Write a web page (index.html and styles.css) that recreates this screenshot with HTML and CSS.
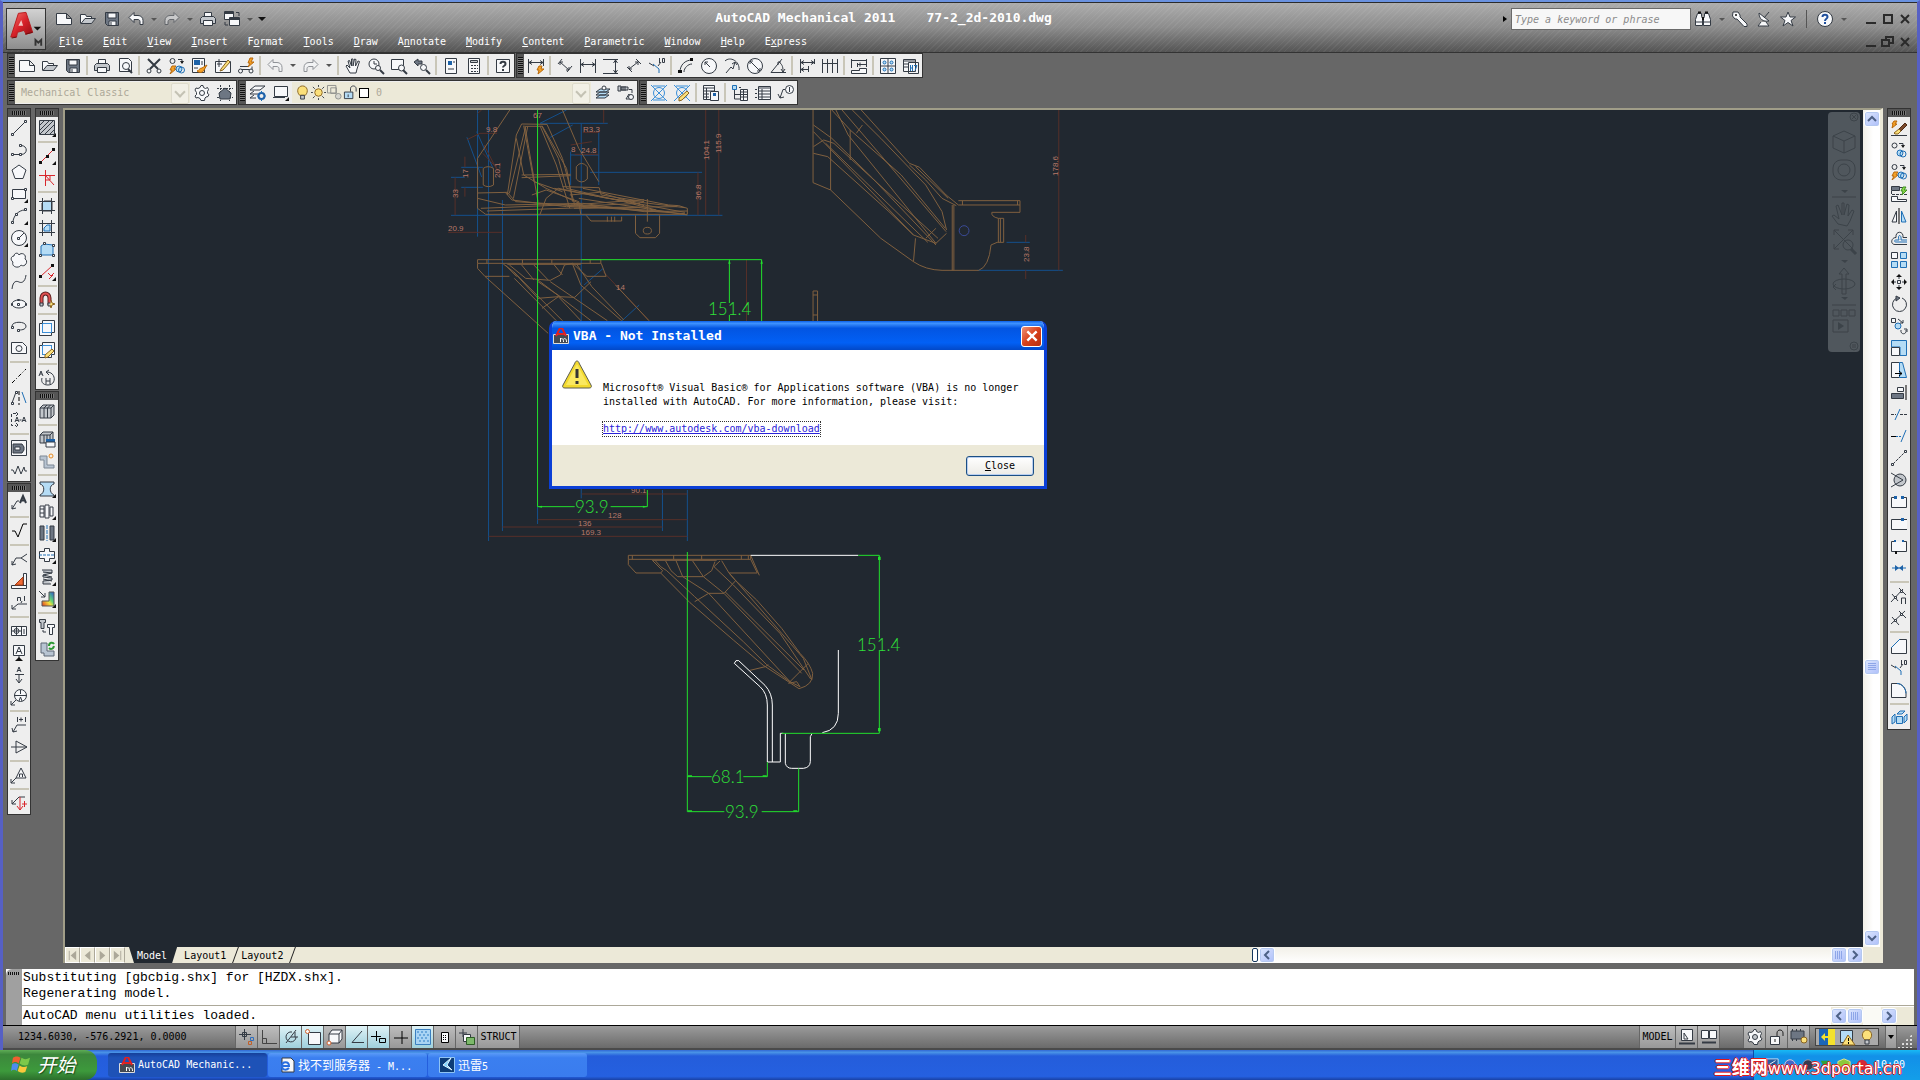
FILE: index.html
```html
<!DOCTYPE html>
<html lang="en">
<head>
<meta charset="utf-8">
<title>AutoCAD Mechanical 2011</title>
<link rel="stylesheet" href="styles.css">
</head>
<body>
<svg class="defs" aria-hidden="true">
  <defs>
    <linearGradient id="redA" x1="0" y1="0" x2="1" y2="1"><stop offset="0" stop-color="#f47a70"/><stop offset=".5" stop-color="#d8222a"/><stop offset="1" stop-color="#8e0d12"/></linearGradient>
    <linearGradient id="rainbow" x1="1" y1="0" x2="0" y2="1"><stop offset="0" stop-color="#2a55d0"/><stop offset=".4" stop-color="#5fd07a"/><stop offset=".6" stop-color="#f2e03c"/><stop offset="1" stop-color="#e0321e"/></linearGradient>
  </defs>
  <symbol id="new" viewBox="0 0 16 16"><path class="w" d="M.5 2.500h10l5 5v6h-15zM10.500 2.500v5h5"/></symbol>
  <symbol id="open" viewBox="0 0 16 16"><path class="w" d="M.5 12.500v-9h5l1 2h5v3"/><path class="g" d="M1 12.500l4-5h10.500l-4 5z"/></symbol>
  <symbol id="save" viewBox="0 0 16 16"><path class="s" d="M1.500 1.500h13v13h-11l-2-2z"/><path class="w" d="M4 2h8v5H4zM5 10h7v4.500H5z"/><path d="M7 11v3"/></symbol>
  <symbol id="undo" viewBox="0 0 16 16"><path class="w" d="M1 6.500l5-5v3h4c3 0 5 2 5 5v4h-3v-3c0-1-1-2-2-2H6v3z"/></symbol>
  <symbol id="redo" viewBox="0 0 16 16"><path class="w" d="M15 6.500l-5-5v3H6c-3 0-5 2-5 5v4h3v-3c0-1 1-2 2-2h4v3z"/></symbol>
  <symbol id="print" viewBox="0 0 16 16"><path class="w" d="M4.500 6V1.500h7V6"/><path class="g" d="M2.500 5.500h11l2 2v5h-15v-5z"/><path class="w" d="M3.500 9.500h9v5h-9z"/></symbol>
  <symbol id="copies" viewBox="0 0 16 16"><circle cx="3.500" cy="3.500" r="2.500"/><path class="k" d="M14 3l-2 3-2-3z"/><path d="M8 1.500h4V4"/><circle class="b lb" cx="9" cy="11" r="3"/><circle class="b" cx="12" cy="12" r="3"/></symbol>
  <symbol id="copyflash" viewBox="0 0 16 16"><circle cx="3.500" cy="3" r="2.500"/><path class="k" d="M15 3l-2 3-2-3z"/><path d="M9 1.500h4V4"/><path class="o" d="M3 8h4L5 11h2l-6 5 2-4H1z"/><circle class="b lb" cx="10" cy="11" r="3"/><circle class="b" cx="12.500" cy="12" r="3"/></symbol>
  <symbol id="acad" viewBox="0 0 16 16"><path fill="#444a52" stroke="#ddd" d="M.5 6.500h15v9H.5z"/><path d="M3 8L7 0h2l4 8M5 6h6" stroke="#e02020" stroke-width="2"/><path d="M7.500 14v-4m0 1c2-1 3 0 3 3m0-3c2-1 3 0 3 3" stroke="#fff"/></symbol>
</svg>

<div class="desktop">
<div class="window">
  <header class="titlebar">
    <button class="appmenu" aria-label="Application menu">
      <svg viewBox="0 0 40 41"><path d="M4 29L12 4l8-1 7 21-7 2-2-4-7 2-1 5z" fill="url(#redA)" stroke="#b81a1c"/><path d="M12 17l3-6 2 6z" fill="#f3c8c4" stroke="none"/><path d="M5 30l5-1M19 26l8-2" stroke="#6d0a0c"/><path class="k" d="M28 18h8l-4 4z"/><path d="M30 38v-6l3 3 3-3v6" stroke="#333" stroke-width="2"/></svg>
    </button>
    <div class="titlerows">
      <div class="row top">
        <div class="quick">
          <button class="q" aria-label="New"><svg><use href="#new"/></svg></button>
          <button class="q" aria-label="Open"><svg><use href="#open"/></svg></button>
          <button class="q" aria-label="Save"><svg><use href="#save"/></svg></button>
          <button class="q" aria-label="Undo"><svg><use href="#undo"/></svg></button>
          <button class="drop" aria-label="Undo list"></button>
          <button class="q dim" aria-label="Redo"><svg><use href="#redo"/></svg></button>
          <button class="drop" aria-label="Redo list"></button>
          <button class="q" aria-label="Plot"><svg><use href="#print"/></svg></button>
          <button class="q" aria-label="Windows"><svg viewBox="0 0 16 16"><path class="w" d="M.5.500h9v8h-9zM5.500 6.500h10v8h-10z"/><path d="M1 2h8M6 8h9" stroke-width="2"/><path d="M12 1.500h3V5M1 11v3h3"/></svg></button>
          <button class="drop" aria-label="Windows list"></button>
          <button class="drop more" aria-label="Customize"></button>
        </div>
        <h1>AutoCAD Mechanical 2011&nbsp;&nbsp;&nbsp; 77-2_2d-2010.dwg</h1>
        <div class="info">
          <button class="tri" aria-label="Collapse search"></button>
          <input type="text" placeholder="Type a keyword or phrase" aria-label="Search">
          <button class="q" aria-label="Find"><svg viewBox="0 0 16 16"><path class="w" d="M2.500 2.500h4v3l1 2v7h-7v-6zM9.500 2.500h4l2 6v6h-7v-7l1-2z"/><path class="k" d="M3 .500h3v2H3zM10 .500h3v2h-3zM7 6h2v3H7z"/><path d="M1 11h6M9 11h6"/></svg></button>
          <button class="drop" aria-label="Find list"></button>
          <button class="q" aria-label="Subscription"><svg viewBox="0 0 16 16"><path class="w" d="M1 1h5l2 3v2l7 7v2.500h-3L5 8H3L.5 5z"/><circle class="k" cx="4" cy="4" r="1"/></svg></button>
          <button class="q" aria-label="Communication"><svg viewBox="0 0 16 16"><path class="w" d="M3 2c0 6 4 9 10 8zM5 11l-3 4h11l-3-4"/><path d="M8 7l5-6"/></svg></button>
          <button class="q" aria-label="Favorites"><svg viewBox="0 0 16 16"><path class="w" d="M8 1l2 5h5.500l-4.500 3.500L13 15l-5-3.500L3 15l2-5.500L.5 6H6z"/></svg></button>
          <i class="bar"></i>
          <button class="q" aria-label="Help"><svg viewBox="0 0 16 16"><circle class="w" cx="8" cy="8" r="7.500"/><path d="M5.500 6c0-3 5-3 5 0 0 2-2.500 1.500-2.500 4M8 11v2" stroke="#1f4f9c" stroke-width="2"/></svg></button>
          <button class="drop" aria-label="Help list"></button>
        </div>
        <div class="controls">
          <button aria-label="Minimize"><svg viewBox="0 0 12 12"><path d="M1 10h10"/></svg></button>
          <button aria-label="Maximize"><svg viewBox="0 0 12 12"><path d="M2 2h8v8H2z"/></svg></button>
          <button aria-label="Close"><svg viewBox="0 0 12 12"><path d="M2 2l8 8M10 2l-8 8"/></svg></button>
        </div>
      </div>
      <div class="row">
        <nav class="menu">
          <a href="#"><u>F</u>ile</a><a href="#"><u>E</u>dit</a><a href="#"><u>V</u>iew</a><a href="#"><u>I</u>nsert</a><a href="#">F<u>o</u>rmat</a><a href="#"><u>T</u>ools</a><a href="#"><u>D</u>raw</a><a href="#">A<u>n</u>notate</a><a href="#"><u>M</u>odify</a><a href="#"><u>C</u>ontent</a><a href="#"><u>P</u>arametric</a><a href="#"><u>W</u>indow</a><a href="#"><u>H</u>elp</a><a href="#">E<u>x</u>press</a>
        </nav>
        <div class="controls">
          <button aria-label="Minimize drawing"><svg viewBox="0 0 12 12"><path d="M1 10h10"/></svg></button>
          <button aria-label="Restore drawing"><svg viewBox="0 0 12 12"><path d="M0 4h7v6H0zM4 4V1h7v6H7"/></svg></button>
          <button aria-label="Close drawing"><svg viewBox="0 0 12 12"><path d="M2 2l8 8M10 2l-8 8"/></svg></button>
        </div>
      </div>
    </div>
  </header>

  <div class="toolbars">
    <div class="barrow">
      <div class="toolbar" role="toolbar" aria-label="Standard">
        <i class="grip"></i>
        <button class="t" aria-label="New"><svg><use href="#new"/></svg></button>
        <button class="t" aria-label="Open"><svg><use href="#open"/></svg></button>
        <button class="t" aria-label="Save"><svg><use href="#save"/></svg></button>
        <i class="sep"></i>
        <button class="t" aria-label="Plot"><svg><use href="#print"/></svg></button>
        <button class="t" aria-label="Preview"><svg viewBox="0 0 16 16"><path class="w" d="M2.500 13.500V.500h9l3 3v10z"/><circle class="w" cx="9" cy="8" r="3.500"/><path d="M11 11l4 4" stroke-width="2"/></svg></button>
        <i class="sep"></i>
        <button class="t" aria-label="Cut"><svg viewBox="0 0 16 16"><path d="M2 1l10 10M14 1L4 11" stroke-width="2"/><circle class="w" cx="3" cy="13" r="2"/><circle class="w" cx="13" cy="13" r="2"/></svg></button>
        <button class="t" aria-label="Power Copy"><svg><use href="#copyflash"/></svg></button>
        <button class="t" aria-label="Match Properties"><svg viewBox="0 0 16 16"><path class="w" d="M.5.500h12v14H.5z"/><path class="bk" d="M2 2h6v5H2z"/><path d="M2 10h4M10 3v4"/><path class="o" d="M5 13c2 0 2-3 5-3l5-3-3 5c-1 3-5 3-7 1z"/></svg></button>
        <button class="t" aria-label="Edit Block"><svg viewBox="0 0 16 16"><path class="w" d="M.5 3.500h15v11H.5z"/><path d="M4 1v8M2 6h5"/><path class="y" d="M6 11l7-9 2 2-7 8-3 1z"/></svg></button>
        <button class="t" aria-label="Power View"><svg viewBox="0 0 16 16"><path class="w" d="M2 8.500h8M2 11.500h12v-3"/><circle class="w" cx="2.500" cy="13" r="2"/><circle class="w" cx="13" cy="13" r="2"/><path class="o" d="M12 0h3l-2 4h3l-6 5 2-4h-2z"/></svg></button>
        <i class="sep"></i>
        <button class="t dim" aria-label="Undo"><svg><use href="#undo"/></svg></button><button class="drop" aria-label="Undo list"></button>
        <button class="t dim" aria-label="Redo"><svg><use href="#redo"/></svg></button><button class="drop" aria-label="Redo list"></button>
        <i class="sep"></i>
        <button class="t" aria-label="Pan"><svg viewBox="0 0 16 16"><path class="w" d="M5 15l-4-7 1-1 3 3-2-7 1.500-.5L6.500 8V1H8v7l1.500-7 1.500.5L10.500 8l2.500-5 1.500.5L12 11l-1 4z"/></svg></button>
        <button class="t" aria-label="Zoom Realtime"><svg viewBox="0 0 16 16"><circle class="w" cx="6" cy="6" r="5"/><path d="M6 3v3h3"/><circle class="w" cx="10" cy="10" r="2.500"/><path d="M12 12l4 4" stroke-width="2"/></svg></button>
        <button class="t" aria-label="Zoom Window"><svg viewBox="0 0 16 16"><path class="w" d="M.5 1.500h12v10H.5z"/><circle class="w" cx="10.500" cy="10" r="3"/><path d="M12 12l4 4" stroke-width="2"/></svg></button>
        <button class="t" aria-label="Zoom Previous"><svg viewBox="0 0 16 16"><path class="s" d="M0 4l4-3v2h4v3H4v2z"/><circle class="w" cx="9.500" cy="9.500" r="3"/><path d="M12 12l4 4" stroke-width="2"/></svg></button>
        <i class="sep"></i>
        <button class="t" aria-label="Properties"><svg viewBox="0 0 16 16"><path class="w" d="M2.500.500h11v15h-11z"/><path class="bk" d="M5 3h4v4H5z"/><path d="M5 11h6M11 3v2"/></svg></button>
        <button class="t" aria-label="Calculator"><svg viewBox="0 0 16 16"><path class="w" d="M2.500.500h11v15h-11z"/><path class="g" d="M4.500 2.500h7v2h-7z"/><path d="M5 7.500h7M5 10.500h7M5 13.500h7" stroke-dasharray="2 1"/></svg></button>
        <i class="sep"></i>
        <button class="t" aria-label="Help"><svg viewBox="0 0 16 16"><path class="w" d="M1.500 1.500h13v13h-13z"/><path d="M5.500 6c0-3 5-3 5 0 0 2-2.500 1.500-2.500 3.500M8 11v2" stroke-width="2"/></svg></button>
      </div>
      <div class="toolbar" role="toolbar" aria-label="Dimension">
        <i class="grip"></i>
        <button class="t" aria-label="Power Dimension"><svg viewBox="0 0 16 16"><path d="M.5 1v14M15.500 1v7M1 4.500h14M4 2.500l-3 2 3 2M12 2.500l3 2-3 2"/><path class="o" d="M11 8h3l-1 3h3l-6 5 1-4H9z"/></svg></button>
        <i class="sep"></i>
        <button class="t" aria-label="Aligned"><svg viewBox="0 0 16 16"><path d="M5 1L1 6M15 8l-5 6M3 4l9 8M3 7V4h3M12 9v3H9"/></svg></button>
        <button class="t" aria-label="Horizontal"><svg viewBox="0 0 16 16"><path d="M.5 1v14M15.500 1v14M1 6.500h14M4 4.500l-3 2 3 2M12 4.500l3 2-3 2"/></svg></button>
        <button class="t" aria-label="Vertical"><svg viewBox="0 0 16 16"><path d="M0 1.500h15M0 15.500h15M12.500 2v13M10.500 5l2-3 2 3M10.500 12l2 3 2-3"/></svg></button>
        <button class="t" aria-label="Rotated"><svg viewBox="0 0 16 16"><path d="M10 1l5 5M1 9l5 5M3 11l9-7M3 8v3h3M9 4h3v3"/></svg></button>
        <button class="t" aria-label="Chamfer"><svg viewBox="0 0 16 16"><path d="M0 5l5 3M9 8l3-4M10.500 0v5M13.500.500h2v4h-2z"/><path class="b" d="M4 6l6 5v4"/></svg></button>
        <i class="sep"></i>
        <button class="t" aria-label="Arc length"><svg viewBox="0 0 16 16"><path d="M2 14C2 7 7 2 14 2M6 14c0-4 4-8 8-8"/><path class="k" d="M0 12h4v3H0zM12 0h3v3h-3z"/></svg></button>
        <button class="t" aria-label="Radius"><svg viewBox="0 0 16 16"><circle class="w" cx="8" cy="8" r="7.500"/><path d="M9 9L4 4M4 7V4h3"/></svg></button>
        <button class="t" aria-label="Jogged"><svg viewBox="0 0 16 16"><path d="M1 3c5-5 15 0 14 9M2 15l5-6 2 2 2-7M8 6l3-2 2 3"/></svg></button>
        <button class="t" aria-label="Diameter"><svg viewBox="0 0 16 16"><circle class="w" cx="8" cy="8" r="7.500"/><path d="M3 3l10 10M3 6V3h3M13 10v3h-3"/></svg></button>
        <button class="t" aria-label="Angular"><svg viewBox="0 0 16 16"><path d="M12 1L1 14.500h15M9 4c4 3 4 6 4 10M8 7V4h3M11 11l2 3 2-3"/></svg></button>
        <i class="sep"></i>
        <button class="t" aria-label="Baseline"><svg viewBox="0 0 16 16"><path d="M1.500 1v14M15.500 1v5M9.500 8v6M2 4.500h13M2 11.500h7M5 2.500l-3 2 3 2M12 2.500l3 2-3 2M5 9.500l-3 2 3 2"/></svg></button>
        <button class="t" aria-label="Chain"><svg viewBox="0 0 16 16"><path d="M.5 1v14M5.500 1v14M10.500 1v14M15.500 1v14M1 5.500h14"/></svg></button>
        <i class="sep"></i>
        <button class="t" aria-label="Automatic dimension"><svg viewBox="0 0 16 16"><path class="w" d="M.5 12.500h8v-2h7v5H.5z"/><path d="M.5 1v9M15.500 1v8M1 2.500h14M6.500 5v4M7 6.500h8M9 4.500v4"/></svg></button>
        <i class="sep"></i>
        <button class="t" aria-label="Hole chart"><svg viewBox="0 0 16 16"><path class="w" d="M.5.500h15v15H.5z"/><path d="M8 1v14M1 8h14"/><circle class="b lb" cx="4.500" cy="4.500" r="1.500"/><circle class="b lb" cx="11.500" cy="4.500" r="1.500"/><circle class="b lb" cx="4.500" cy="11.500" r="1.500"/><circle class="b lb" cx="11.500" cy="11.500" r="1.500"/></svg></button>
        <button class="t" aria-label="Fits list"><svg viewBox="0 0 16 16"><path class="w" d="M.5 1.500h12v12H.5zM5.500 4.500h10v11h-10z"/><path d="M1 3h11M1 6h4M1 9h4"/><path class="b" d="M7.500 7v6M9.500 7v6M8 10h1M11 7.500h3l-2 5"/></svg></button>
      </div>
    </div>
    <div class="barrow">
      <div class="toolbar" role="toolbar" aria-label="Workspaces">
        <i class="grip"></i>
        <div class="combo ws"><select aria-label="Workspace" disabled><option>Mechanical Classic</option></select></div>
        <button class="t" aria-label="Workspace settings"><svg viewBox="0 0 16 16"><path class="w" d="M7 .500h2l.5 2 2 1 2-1 1 2-1 2v2l1.500 1-1 2-2 .5-1 1-.5 2.500H7l-1-2-2-1-2 .5-1-2 1.500-1.500v-2L1 5l1-2 2 .5 2-1z"/><circle cx="8" cy="8" r="2.500"/></svg></button>
        <button class="t" aria-label="My workspace"><svg viewBox="0 0 16 16"><path d="M0 3.500h16M0 12.500h16M3.500 0v16M12.500 0v16" stroke-dasharray="2 1"/><path class="s" d="M2 8l6-5 6 5-1 6H3z"/></svg></button>
      </div>
      <div class="toolbar" role="toolbar" aria-label="Layers">
        <i class="grip"></i>
        <button class="t" aria-label="Layer manager"><svg viewBox="0 0 16 16"><path class="w" d="M0 5l5-4h10l-5 4zM4 6L0 9h8M4 10l-4 3h6"/><circle cx="11.500" cy="11" r="3" stroke="#1d5fa8" stroke-width="2"/><path class="b" d="M11.500 6v2M11.500 14v2M7 11h2M14 11h2"/></svg></button>
        <button class="t" aria-label="Layer"><svg viewBox="0 0 16 16"><path class="w" d="M1.500 1.500h13v10h-13z"/><path d="M0 12.500h12"/><path class="k" d="M16 12v4h-4z"/></svg></button>
        <div class="combo layer">
          <svg viewBox="0 0 16 16"><path class="y" d="M5 11C1 7 3 1 8 1s7 6 3 10z"/><path class="g" d="M6 11h4v4H6z"/></svg>
          <svg viewBox="0 0 16 16"><circle class="y" cx="8" cy="8" r="4"/><path d="M8 0v2M8 14v2M0 8h2M14 8h2M2 2l2 2M12 12l2 2M2 14l2-2M12 4l2-2"/></svg>
          <svg viewBox="0 0 16 16" class="dim"><path d="M.5.500h9v8h-9zM4 3h6v6H4z"/><circle class="g" cx="12" cy="12" r="3"/></svg>
          <svg viewBox="0 0 16 16"><path class="lb" d="M1.500 7.500h9v7h-9z"/><path d="M8 7V4c0-4 6-4 6 0v3M5.500 10v3"/></svg>
          <i class="swatch"></i>
          <select aria-label="Current layer" disabled><option>0</option></select>
        </div>
        <button class="t" aria-label="Make layer current"><svg viewBox="0 0 16 16"><path class="lb" d="M1 13l4-3h9l-4 3zM1 10l4-3h9l-4 3zM1 7l4-3h10l-4 3z"/><circle class="w" cx="9" cy="3" r="2"/></svg></button>
        <button class="t" aria-label="Move to layer"><svg viewBox="0 0 16 16"><path class="g" d="M0 1h3v5H0zM3 2h7v3H3z"/><path d="M5 1v5M7 1v5M11 4.500h3V8"/><path class="w" d="M8 14l3-5 2 5z"/><circle class="w" cx="13" cy="12" r="2.500"/></svg></button>
      </div>
      <div class="toolbar" role="toolbar" aria-label="Part reference">
        <i class="grip"></i>
        <button class="t" aria-label="Centerlines"><svg viewBox="0 0 16 16" class="blue"><circle cx="8" cy="8" r="5.500"/><path d="M0 0l16 16M16 0L0 16M2 1h12M2 15h12"/></svg></button>
        <button class="t" aria-label="Edit centerlines"><svg viewBox="0 0 16 16"><g class="blue"><circle cx="8" cy="8" r="5.500"/><path d="M0 0l16 16M16 0L0 16M2 1h12"/></g><path class="y" d="M5 13l8-7 2 2-7 7-3 1z"/></svg></button>
        <i class="sep"></i>
        <button class="t" aria-label="BOM"><svg viewBox="0 0 16 16"><path class="w" d="M.5.500h11v14H.5z"/><path d="M1 3h10M3.500 3v11M1 6h10M1 9h5M1 12h5"/><path class="w" d="M7.500 6.500h8v9h-8z"/><path class="bk" d="M10 8h3v3h-3z"/></svg></button>
        <i class="sep"></i>
        <button class="t" aria-label="Parts tree"><svg viewBox="0 0 16 16"><path class="b lb" d="M.5.500h4v4h-4z"/><path d="M2.500 5v9H8M3 9.500h5M7 2.500h2"/><path class="w" d="M8.500 4.500h7v11h-7z"/><path d="M9 7h6M9 9.500h6M9 12h6M11.500 5v10"/></svg></button>
        <button class="t" aria-label="Parts list"><svg viewBox="0 0 16 16"><path class="w" d="M3.500 1.500h12v13h-12z"/><path d="M4 3h11M4 6h11M4 9h11M4 12h11M7 4v10M0 4.500h2M0 8.500h2M0 12.500h2"/></svg></button>
        <button class="t" aria-label="Balloon"><svg viewBox="0 0 16 16"><circle class="w" cx="11.500" cy="4.500" r="4"/><path d="M11.500 2v5M7 4.500H5L2 13M0 9l2 4 4-1"/></svg></button>
      </div>
    </div>
  </div>

  <main class="work">
    <div class="dockcol">
      <div class="dock" role="toolbar" aria-label="Draw">
        <i class="grip"></i>
        <button class="t" aria-label="Line"><svg viewBox="0 0 16 16"><path d="M2 14L14 2"/><path class="w" d="M.5 13.500h2v2h-2zM13.500.500h2v2h-2z"/></svg></button>
        <button class="t" aria-label="Polyline"><svg viewBox="0 0 16 16"><path d="M3 12.500h7c7 0 7-9 0-9"/><path class="w" d="M.5 11.500h2v2h-2zM8.500 11.500h2v2h-2zM8.500 2.500h2v2h-2z"/></svg></button>
        <button class="t" aria-label="Polygon"><svg viewBox="0 0 16 16"><path class="w" d="M8 1l7 5-3 8.500H4L1 6z"/></svg></button>
        <button class="t" aria-label="Rectangle"><svg viewBox="0 0 16 16"><path class="w" d="M1.500 3.500h13v9h-13z"/><path class="w" d="M.5 11.500h2v2h-2zM13.500 2.500h2v2h-2z"/><path class="k" d="M17 13v4h-4z"/></svg></button>
        <button class="t" aria-label="Arc"><svg viewBox="0 0 16 16"><path d="M2 14C2 9 7 2 14 2"/><path class="w" d="M.5 13.500h2v2h-2zM4.500 5.500h2v2h-2zM13.500.500h2v2h-2z"/><path class="k" d="M17 13v4h-4z"/></svg></button>
        <button class="t" aria-label="Circle"><svg viewBox="0 0 16 16"><circle class="w" cx="8" cy="8" r="7.500"/><path d="M8 8l5-5"/><path class="w" d="M6.500 7.500h2v2h-2z"/><path class="k" d="M17 13v4h-4z"/></svg></button>
        <button class="t" aria-label="Revision cloud"><svg viewBox="0 0 16 16"><path class="w" d="M8 3c2-3 8-1 6 4 4 2 0 9-4 6-2 4-10 2-8-3C-1 8 0 4 3 4c0-3 4-4 5-1z"/></svg></button>
        <button class="t" aria-label="Spline"><svg viewBox="0 0 16 16"><path d="M1 15c1-9 5-8 7-7s6 1 7-7"/></svg></button>
        <button class="t" aria-label="Ellipse"><svg viewBox="0 0 16 16"><ellipse class="w" cx="8" cy="8" rx="7" ry="4"/><path class="w" d="M6.500 7.500h2v2h-2zM.5 7.500h1v2h-1zM14.500 7.500h1v2h-1zM6.500 3.500h2v1h-2z"/></svg></button>
        <button class="t" aria-label="Ellipse arc"><svg viewBox="0 0 16 16"><path d="M1 8c0-5 14-5 14 0 0 3-3 4-7 4"/><path class="w" d="M.5 8.500h2v2h-2zM6.500 11.500h2v2h-2z"/></svg></button>
        <button class="t" aria-label="Region"><svg viewBox="0 0 16 16"><path class="w" d="M.5 2.500h11l4 4v7H.5z"/><circle class="w" cx="8" cy="8.500" r="3"/></svg></button>
        <i class="sep"></i>
        <button class="t" aria-label="Construction line"><svg viewBox="0 0 16 16"><path d="M1 15L15 1" stroke="#000" stroke-dasharray="4 2 1 2"/></svg></button>
        <button class="t" aria-label="Symmetrical lines"><svg viewBox="0 0 16 16"><path d="M1 13L5 2"/><path d="M8 1v14" stroke="#000" stroke-dasharray="4 2"/><path class="b" d="M11 2l4 11"/><path class="w" d="M.5 12.500h2v2h-2zM4.500 1.500h2v2h-2z"/></svg></button>
        <button class="t" aria-label="Section line"><svg viewBox="0 0 16 16"><path d="M5 1.500H.5v12H5" stroke-dasharray="3 2"/><path d="M5 11l2 2-2 2M5 0l2 2-2 2"/><path d="M4 10l2-5 2 5M5 8.500h2M8.500 8h2M11 10l2-5 2 5M12 8.500h2"/></svg></button>
        <i class="sep"></i>
        <button class="t" aria-label="Hide situation"><svg viewBox="0 0 16 16"><path class="w" d="M.5.500h15v15H.5z"/><path class="s" d="M2 4h9l2 3v3l-2 3H2z"/><path class="w" d="M4 7h5v3H4z"/></svg></button>
        <button class="t" aria-label="Zigzag"><svg viewBox="0 0 16 16"><path d="M0 8h2l2 4 3-8 3 8 3-7 1 4h2"/></svg></button>
      </div>
      <div class="dock" role="toolbar" aria-label="Annotation">
        <i class="grip"></i>
        <button class="t" aria-label="Leader note"><svg viewBox="0 0 16 16"><path d="M1 14l5-8h2M1 10v4l4-1"/><path d="M9 8l3-7 3 7M10 5.500h4" stroke-width="2"/></svg></button>
        <i class="sep"></i>
        <button class="t" aria-label="Surface texture"><svg viewBox="0 0 16 16"><path d="M1 8h3l3 6 5-13h4" stroke="#000"/></svg></button>
        <i class="sep"></i>
        <button class="t" aria-label="Welding"><svg viewBox="0 0 16 16"><path d="M1 14l4-7h5l6-4M10 7l6 4M1 10v4l4-1"/></svg></button>
        <button class="t" aria-label="Weld"><svg viewBox="0 0 16 16"><path class="w" d="M.5 12.500h15v3H.5zM12.500.500h3v12h-3z"/><path d="M12 4v8H4z" fill="#ef6a35" stroke="#a63c14"/></svg></button>
        <button class="t" aria-label="Datum"><svg viewBox="0 0 16 16"><path d="M1 14l6-5h9M1 10v4h4M6.500 6V2.500h3V6M11 6l-1 2M13.500 1v5"/></svg></button>
        <i class="sep"></i>
        <button class="t" aria-label="Feature control"><svg viewBox="0 0 16 16"><path class="w" d="M.5 3.500h15v9H.5z"/><path d="M10.500 4v8M13 6v5M5.500 4v8M1 8h9"/><circle cx="5.500" cy="8" r="2.500"/></svg></button>
        <button class="t" aria-label="Datum identifier"><svg viewBox="0 0 16 16"><path class="w" d="M2.500.500h11v10h-11z"/><path d="M5 9l3-7 3 7M6 6.500h4M8 11v3"/><path class="k" d="M8 12l4 4H4z"/></svg></button>
        <button class="t" aria-label="Edge"><svg viewBox="0 0 16 16"><path d="M6 5l2-5 2 5M7 3.500h2M4 7.500h9M8 8v8M5 12l3 4 3-4"/></svg></button>
        <button class="t" aria-label="Datum target"><svg viewBox="0 0 16 16"><circle class="w" cx="9.500" cy="6.500" r="6"/><path d="M3 6.500h13M9.500 1v4M8 12l1.500-4 1.500 4M5 11l-5 5M0 12v4h4"/></svg></button>
        <i class="sep"></i>
        <button class="t" aria-label="Taper"><svg viewBox="0 0 16 16"><path d="M2 15l4-7h9M1 11l1 4 4-1M6.500 0v5M8 2.500h4M10 .500v4M14.500 0v5"/></svg></button>
        <button class="t" aria-label="Slope"><svg viewBox="0 0 16 16"><path d="M0 8h16M5 2l11 6-11 6z"/></svg></button>
        <i class="sep"></i>
        <button class="t" aria-label="Note symbol"><svg viewBox="0 0 16 16"><path class="w" d="M10 1l5 10H5z"/><path d="M8.500 10V7h3v3M5 11l-5 5M0 12v4h4"/></svg></button>
        <i class="sep"></i>
        <button class="t" aria-label="Insert marker"><svg viewBox="0 0 16 16"><path d="M1 9l7-7h6M1 5v4h4"/><path class="r" d="M9 2v13M6 11l3 4 3-4M11 9h5M13.500 6v6"/></svg></button>
      </div>
    </div>
    <div class="dockcol">
      <div class="dock" role="toolbar" aria-label="Hatch and design">
        <i class="grip"></i>
        <button class="t" aria-label="Hatch"><svg viewBox="0 0 16 16"><path class="g" d="M.5.500h15v14H.5z"/><path d="M1 5l4-4M1 10l9-9M1 14L14 1M6 14l9-9M11 14l4-4"/><path class="k" d="M17 13v4h-4z"/></svg></button>
        <i class="sep"></i>
        <button class="t" aria-label="Centerline"><svg viewBox="0 0 16 16"><path class="r" d="M2 14L14 2"/><path class="k" d="M0 13h3v3H0zM13 0h3v3h-3zM7 7h3v3H7zM17 13v4h-4z"/></svg></button>
        <button class="t" aria-label="Center cross"><svg viewBox="0 0 16 16"><path class="r" d="M0 5.500h16M6.500 0v16M6 5l9 10M6 10h5V5"/></svg></button>
        <i class="sep"></i>
        <button class="t" aria-label="Contour"><svg viewBox="0 0 16 16"><path class="lb" d="M3 5l2-2h8v10H3z"/><path d="M3.500 0v16M12.500 0v16M0 3.500h16M0 12.500h16"/></svg></button>
        <button class="t" aria-label="Contour inside"><svg viewBox="0 0 16 16"><path d="M3.500 0v16M12.500 0v16M0 3.500h16M0 12.500h16"/><path class="b lb" d="M5 11V8l3-3h3v6z"/></svg></button>
        <button class="t" aria-label="Contour edit"><svg viewBox="0 0 16 16"><path class="b lb" d="M2 4l3-2 9 1v10H2z"/><path class="w" d="M.5 12.500h2v2h-2zM13.500 12.500h2v2h-2zM13.500 2.500h2v2h-2zM4.500.500h2v2h-2z"/></svg></button>
        <button class="t" aria-label="Break axis"><svg viewBox="0 0 16 16"><path class="r" d="M2 12L13 2M9 9l3 3 3-3M10 15l4-4"/><path class="k" d="M0 11h3v3H0zM12 0h3v3h-3zM17 13v4h-4z"/></svg></button>
        <i class="sep"></i>
        <button class="t" aria-label="Snap"><svg viewBox="0 0 16 16"><path d="M2.500 13V6c0-6 8-6 8 0v7" stroke="#5a2020" stroke-width="4"/><path d="M2.500 13V6c0-6 8-6 8 0v7" stroke="#e05050" stroke-width="2"/><path class="g" d="M1 11h3v3H1zM9 11h3v3H9z"/><path class="y" d="M12 8l1 3 3 1-3 1-1 3-1-3"/></svg></button>
        <i class="sep"></i>
        <button class="t" aria-label="View"><svg viewBox="0 0 16 16"><path class="w" d="M.5 3.500h12v12H.5zM3.500.500h12v12h-12z"/><path class="blue" d="M3.500 3.500h9v9h-9z"/></svg></button>
        <button class="t" aria-label="Edit view"><svg viewBox="0 0 16 16"><path class="w" d="M.5 3.500h12v12H.5zM3.500.500h12v12h-12z"/><path class="blue" d="M3.500 3.500h9v9h-9z"/><path class="y" d="M6 13l7-6 2 2-6 6-3 1z"/></svg></button>
        <i class="sep"></i>
        <button class="t" aria-label="Recalculate"><svg viewBox="0 0 16 16"><path d="M0 6l2-5 2 5M1 4h2M8 2c9 0 10 13 1 13-6 0-7-4-6-7M10 0L7 2l3 3M7 8v6M11 8v6M7 11h4"/></svg></button>
      </div>
      <div class="dock" role="toolbar" aria-label="Content">
        <i class="grip"></i>
        <button class="t" aria-label="Library"><svg viewBox="0 0 16 16"><path class="g" d="M1 5l3-3h11v10l-3 3H1z"/><path d="M1 5h11v10M12 5l3-3M5 5v10M8.500 5v10M5 5l3-3M8.500 5l3-3"/></svg></button>
        <i class="sep"></i>
        <button class="t" aria-label="Library manager"><svg viewBox="0 0 16 16"><path class="g" d="M1 4l3-3h10v8l-3 3H1z"/><path d="M1 4h10v8M5 4v8M8 4v8M11 4l3-3"/><path class="bk" d="M7 8h9v3H7z"/><path class="w" d="M7 11h9v5H7z"/></svg></button>
        <button class="t" aria-label="Power parts"><svg viewBox="0 0 16 16"><path d="M1 3h7v9h7v3H5V7H1z" fill="#b8c4d2" stroke="#7d8794"/><circle cx="12" cy="3" r="2" stroke="#e88a20"/></svg></button>
        <i class="sep"></i>
        <button class="t" aria-label="Steel shapes"><svg viewBox="0 0 16 16"><path class="lb" d="M1 1h14v2c-5 1-5 9 0 11v1H1v-1c5-2 5-10 0-11z"/><path class="k" d="M17 13v4h-4z"/></svg></button>
        <button class="t" aria-label="Screws"><svg viewBox="0 0 16 16"><path class="w" d="M1 3h4v11H1zM6 2h4v13H6zM11 4h3v9h-3z"/><path d="M1 6h4M1 10h4"/><path class="k" d="M17 13v4h-4z"/></svg></button>
        <button class="t" aria-label="Holes"><svg viewBox="0 0 16 16"><path class="s" d="M1 1h4v14H1zM11 1h4v14h-4z"/><path class="b" d="M8 0v16" stroke-dasharray="4 1"/><path class="k" d="M17 13v4h-4z"/></svg></button>
        <button class="t" aria-label="Shaft"><svg viewBox="0 0 16 16"><path class="w" d="M.5 4.500h5v-3h5v3h5v7h-5v3h-5v-3h-5z"/><path class="b" d="M0 8h16" stroke-dasharray="3 1"/><path class="k" d="M17 13v4h-4z"/></svg></button>
        <button class="t" aria-label="Springs"><svg viewBox="0 0 16 16"><path class="g" d="M3 1h10v3l-9 2v2l9 1v2l-9 1v3h8"/><path d="M13 4L4 3M13 8L4 6M13 12l-9-2"/><path class="k" d="M17 13v4h-4z"/></svg></button>
        <button class="t" aria-label="Stress analysis"><svg viewBox="0 0 16 16"><path d="M10 1h5v14H3v-5h7z" fill="url(#rainbow)" stroke="#555"/><path d="M0 0l6 6M6 2v4H2"/><path class="k" d="M17 13v4h-4z"/></svg></button>
        <i class="sep"></i>
        <button class="t" aria-label="Change representation"><svg viewBox="0 0 16 16"><path class="g" d="M.5.500h6v3H5v6H2v-6H.5z"/><path class="w" d="M8.500 5.500h7v3h-2v7h-3v-7h-2z"/><path d="M4 11v2h3"/></svg></button>
        <button class="t" aria-label="Refresh parts"><svg viewBox="0 0 16 16"><path d="M2 2h6v8h7v5H5v-3H2z" fill="#b8c4d2" stroke="#5d6774"/><path d="M10 5c0-4 4-4 5-2M15 5c-1 4-4 3-5 2" stroke="#2e9a35" stroke-width="2"/></svg></button>
      </div>
    </div>

    <section class="mdi" aria-label="Drawing window">
      <div class="view">
        <div class="canvas">
          <svg class="drawing" role="img" aria-label="Bracket drawing">
            <g transform="matrix(.40816 0 0 .33333 375 -5)">
              <path class="dblue" d="M92 15V395M119 15V1308M153 285V1278M346 55V1180M239 1205V1257M545 1155V1278M606 1155V1308M27 331H692M368 202H642M245 55H411M389 80V240M320 140V240M320 150H389M52 187H105M52 247H105M27 217H60M66 97L102 216M90 80L130 190M245 55L310 15M270 97L325 60M353 540L400 490M446 647L488 600M1388 412H1445M1317 496H1526"/>
              <path class="dred" d="M651 15V331M683 15V331M632 202V331M401 15V55M37 217V331M61 155V187M61 247V275M20 382H153M66 104L98 85H140M102 15L92 25M350 82H390M330 148H388M320 120L372 110M751 464V648M1516 15V496M1435 390V412M1435 496V522M400 500L512 647M347 1167H606M239 1244H606M153 1266H545M119 1294H606M108 120L146 210M105 145L140 190"/>
              <path class="dbrown" d="M171 15L92 160V310L112 328H606V310L585 302 560 300 350 250M165 270L187 90 200 57 262 58 300 160 330 300M170 265L210 64H250L290 160 310 250M180 280L215 64M208 62L240 290M205 62L230 230 300 260M187 100L205 210 260 250 350 300M245 62L285 180 318 310M250 62L310 190 325 290M92 264L165 262 185 290 350 302 560 320M92 280L160 300 350 295 500 320 606 318M100 310L300 300 600 326M115 318L350 308 580 305M160 262L176 285 310 305 490 295M300 245L390 248 395 270 500 290M310 250L450 290 530 315M280 250L600 322M200 210L320 208M200 218L320 212M245 328L260 280 290 250 410 280 600 308M225 270L260 255 340 290 345 328M300 15L340 130 389 230M318 270L390 262 500 302M320 300L500 284M328 310L490 308M340 280L606 330M106 190V240Q118 250 131 240V190Q118 180 106 190ZM334 185V222Q346 240 361 222V185Q346 165 334 185ZM358 331L370 348H445V335M410 335V350M420 335V350M428 335V350M479 331V385L490 398H528L538 385V331M508 282V350M92 464H394V475H92ZM115 464V475M202 464V475M274 464V475M368 464V475M92 475V490L110 514H170M110 514L265 685M155 477L180 500L300 647M160 480L188 515M165 478H345M170 480L210 520 270 526 295 510 305 480M200 480L230 525M240 530L295 575M230 480L265 525M280 480L300 510M305 480L325 475 345 498 360 514H407M395 475L407 514M325 478L345 540 445 647M335 478L372 545 450 645M180 500L240 580 290 575M240 525L370 647M290 575L345 647M250 610L290 575 330 577 370 530M270 530L410 647M182 520L285 647"/>
              <circle class="dbrown" cx="508" cy="377" r="10"/>
              <path class="dbrown" d="M914 15V233L957 255 1080 400 1160 470Q1190 495 1230 496H1320Q1345 485 1350 420L1365 412H1381V340H1368V412M957 15V255M1373 340V412M1032 15L1150 175 1175 187 1240 270 1270 300H1421V287H1270M1280 287V300M1415 287V300M1421 300V322H1352Q1350 335 1368 340M1150 180L1190 225 1230 280 1265 302M1165 185L1245 280M1259 300V496M1255 300V496M960 15L1005 75 1130 210 1238 370M985 15L1240 380M1010 15L1080 100 1190 240 1230 320 1241 375M970 15L1000 90 1215 415M915 60L960 100 1060 220 1215 420M915 80L1160 390 1215 415 1241 385M915 145L950 155 1100 320 1160 390M915 125L940 105 965 115 1220 400M945 115L1195 412M1005 75V165M1020 85L1035 60M1160 470L1165 400M1190 400L1215 370M914 648V558H925V648M914 570H925M914 630H925M430 540L512 647"/>
              <ellipse cx="1284" cy="377" rx="12" ry="15" stroke="#3a4a96"/>
              <path class="dgreen" d="M239 15V1205M346 464H788V650M709 464V594M709 630V650M508 1155V1205M239 1205H330M418 1205H508"/>
              <path class="darrow" d="M706 476l3-12 3 12zM785 476l3-12 3 12zM250 1202l-11 3 11 3zM497 1202l11 3-11 3z"/>
            </g>
            <g transform="matrix(.33333 0 0 .33333 535 420)">
              <path class="dbrown" d="M85 76H452V88H85ZM97 76V88M221 76V88M305 76V88M424 76V88M445 76V88M85 88V104L108 129H182M452 76L478 136M452 88L472 129H387M157 91H350M157 91L188 122 182 129 270 218 400 330 490 406 597 476Q640 465 638 430Q630 400 600 370L545 295 470 210 407 152 387 129 365 92M165 91L182 110 200 122 284 200 430 335 500 404 570 455 600 470M197 93L213 122 233 140 310 140 335 122 345 95M228 92L248 140 326 190 372 190 407 152M278 93L310 140 372 190 605 430M360 93L342 110 400 165 540 310 632 447M326 190L570 455M284 215L326 190M375 185L612 420M388 130L545 310 610 385 636 450M450 421L496 410 505 404M570 455L625 400M565 460L590 455 600 470"/>
              <path class="dwhite" d="M452 76H775M415 391L495 466Q517 490 517 525V696M403 400L480 470Q502 490 502 525V696H541V610H550M403 400L408 392H415M556 610V700Q560 715 575 715H610Q630 713 631 695V620L636 611M715 360V550Q715 600 667 608"/>
              <path class="dgreen" d="M262 66V845M775 76H838V325M838 362V610H545M502 697V740M262 740H335M430 740H502M596 715V845M262 845H373M485 845H596"/>
              <path class="darrow" d="M834 80h8v10h-8zM834 594h8v10h-8zM264 736h12v4h-12zM488 736h12v4h-12zM264 841h12v4h-12zM580 841h12v4h-12z"/>
            </g>
            <g class="big"><text x="643" y="205">151.4</text><text x="510" y="403">93.9</text><text x="792" y="541">151.4</text><text x="646" y="673">68.1</text><text x="660" y="708">93.9</text></g>
            <g class="small"><text x="383" y="121">20.9</text><text x="513" y="416">136</text><text x="543" y="408">128</text><text x="516" y="425">169.3</text><text x="566" y="383">90.1</text><text x="421" y="22">9.8</text><text x="516" y="43">24.8</text><text x="518" y="22">R3.3</text><text x="506" y="42">8</text><text x="468" y="8">67</text><text x="551" y="180">14</text>
              <text transform="translate(644 50) rotate(-90)">104.1</text><text transform="translate(656 43) rotate(-90)">115.9</text><text transform="translate(636 90) rotate(-90)">36.8</text><text transform="translate(993 66) rotate(-90)">178.6</text><text transform="translate(964 152) rotate(-90)">23.8</text><text transform="translate(393 88) rotate(-90)">33</text><text transform="translate(403 68) rotate(-90)">17</text><text transform="translate(435 68) rotate(-90)">20.1</text></g>
          </svg>
          <div class="navbar">
            <svg viewBox="0 0 32 240"><circle cx="26" cy="5" r="4"/><path d="M24 3l4 4M28 3l-4 4"/><path d="M16 19l11 5v12l-11 5-11-5V24zM5 24l11 5 11-5M16 29v12"/><rect x="5" y="48" width="22" height="20" rx="8"/><circle cx="16" cy="58" r="6"/><path class="nf" d="M13 78h7l-3 3z"/><path d="M4 85h24M10 112L4 104l2-1 5 4-3-13 2-1 4 10V91h2v12l3-11 2 1-1 11 4-6 2 1-4 10-3 5zM6 118l19 19M25 118L6 137M6 123v-5h5M20 118h5v5M6 132v5h5"/><circle cx="20" cy="133" r="5"/><path d="M23 137l5 5" stroke-width="3"/><path class="nf" d="M13 148h7l-3 3z"/><ellipse cx="16" cy="172" rx="11" ry="5"/><path d="M14 182v-20h-3l5-6 5 6h-3v20zM8 172l-3 3 3 3"/><path class="nf" d="M13 185h7l-3 3z"/><path d="M4 193h24M5 198h6v6H5zM13 198h6v6h-6zM21 198h6v6h-6zM5 208h15v12H5z"/><path class="nf" d="M10 210l6 4-6 4z"/><circle cx="26" cy="234" r="4"/><path d="M24 233h4M24 235h4"/></svg>
          </div>

          <section class="dialog" role="dialog" aria-labelledby="dlgtitle">
            <header><svg><use href="#acad"/></svg><h2 id="dlgtitle">VBA - Not Installed</h2>
              <button class="x" aria-label="Close dialog"><svg viewBox="0 0 12 12"><path d="M2 2l8 8M10 2l-8 8" stroke="#fff" stroke-width="2"/></svg></button></header>
            <div class="message">
              <svg class="warn" viewBox="0 0 30 30"><path d="M15 1c1 0 2 1 2 2l12 22c1 2 0 3-2 3H3c-2 0-3-1-2-3L13 3c0-1 1-2 2-2z" fill="#f2d92e" stroke="#5c5c50"/><path d="M4 25L15 4l11 21z" fill="#fae860" stroke="none"/><path d="M15 9v9M15 21v3" stroke="#333" stroke-width="3"/></svg>
              <div><p>Microsoft® Visual Basic® for Applications software (VBA) is no longer<br>installed with AutoCAD. For more information, please visit:</p>
              <a href="#">http://www.autodesk.com/vba-download</a></div>
            </div>
            <footer><button class="ok"><span><u>C</u>lose</span></button></footer>
          </section>
        </div>
        <div class="vscroll"><button class="sb" aria-label="Scroll up"><svg viewBox="0 0 10 10"><path d="M1 7l4-4 4 4"/></svg></button><i class="above"></i><button class="sb" aria-label="Vertical position"><svg viewBox="0 0 10 10"><path class="ln" d="M1 1.500h8M1 3.500h8M1 5.500h8M1 7.500h8"/></svg></button><i class="below"></i><button class="sb" aria-label="Scroll down"><svg viewBox="0 0 10 10"><path d="M1 3l4 4 4-4"/></svg></button></div>
      </div>
      <div class="tabrow">
        <div class="tabnav">
          <button aria-label="First tab"><svg viewBox="0 0 14 14"><path class="nf" d="M11 2v10L5 7z"/><path d="M3.500 2v10"/></svg></button>
          <button aria-label="Previous tab"><svg viewBox="0 0 14 14"><path class="nf" d="M10 2v10L4 7z"/></svg></button>
          <button aria-label="Next tab"><svg viewBox="0 0 14 14"><path class="nf" d="M4 2v10l6-5z"/></svg></button>
          <button aria-label="Last tab"><svg viewBox="0 0 14 14"><path class="nf" d="M3 2v10l6-5z"/><path d="M10.500 2v10"/></svg></button>
        </div>
        <button class="tab on">Model</button><button class="tab">Layout1</button><button class="tab">Layout2</button>
        <div class="hscroll"><i class="split"></i><button class="sb" aria-label="Scroll left"><svg viewBox="0 0 10 10"><path d="M7 1L3 5l4 4"/></svg></button><i class="space"></i><button class="sb" aria-label="Horizontal position"><svg viewBox="0 0 10 10"><path class="ln" d="M1.500 1v8M3.500 1v8M5.500 1v8M7.500 1v8"/></svg></button><button class="sb" aria-label="Scroll right"><svg viewBox="0 0 10 10"><path d="M3 1l4 4-4 4"/></svg></button></div>
      </div>
    </section>

    <div class="dockcol">
      <div class="dock" role="toolbar" aria-label="Modify">
        <i class="grip"></i>
        <button class="t" aria-label="Power Erase"><svg viewBox="0 0 16 16"><path class="o" d="M3 1h3L4 4h2L1 8l1-4H1z"/><path d="M0 15.500h16"/><path d="M8 9l6-6 2 2-6 6z" fill="#7c4a2c" stroke="#4d2b16"/><path class="y" d="M3 13l5-4 2 2-3 3H4z"/></svg></button>
        <button class="t" aria-label="Copy"><svg><use href="#copies"/></svg></button>
        <button class="t" aria-label="Power Copy"><svg><use href="#copyflash"/></svg></button>
        <button class="t" aria-label="Power Recall"><svg viewBox="0 0 16 16"><path class="s" d="M.5.500h8v4h-8z"/><path d="M.5 5v3.500H16M9 1.500h6" stroke-dasharray="3 1"/><path class="w" d="M.5 10.500h6v3h9v2H.5z"/><path d="M12 1h3l-2 3h3l-5 5 1-4h-2z" fill="#8fe04c" stroke="#3f8f20"/></svg></button>
        <button class="t" aria-label="Mirror"><svg viewBox="0 0 16 16"><path class="w" d="M5.500 3v11H1z"/><path class="b lb" d="M10.500 3v11H15z"/><path d="M8 0v16" stroke="#000"/></svg></button>
        <button class="t" aria-label="Offset"><svg viewBox="0 0 16 16"><path d="M16 14.500H4c-5 0-4-7 1-7-1-7 8-7 7 0h4"/><path class="b" d="M16 12H5c-2 0-2-2 0-2h3c-2-6 3-6 2 0h6"/></svg></button>
        <button class="t" aria-label="Array"><svg viewBox="0 0 16 16"><path class="w" d="M.5.500h6v6h-6z"/><path class="b lb" d="M9.500.500h6v6h-6zM.5 9.500h6v6h-6zM9.500 9.500h6v6h-6z"/></svg></button>
        <button class="t" aria-label="Move"><svg viewBox="0 0 16 16"><path class="k" d="M8 0l3 3H5zM8 16l3-3H5zM0 8l3-3v6zM16 8l-3-3v6z"/><path d="M8 3v2M8 11v2M3 8h2M11 8h2M6.500 6.500h3v3h-3z"/></svg></button>
        <button class="t" aria-label="Rotate"><svg viewBox="0 0 16 16"><path d="M6 2a7 7 0 1 0 5 0"/><path class="s" d="M5 0l4 2-4 3z"/></svg></button>
        <button class="t" aria-label="Align"><svg viewBox="0 0 16 16"><path class="w" d="M.5.500h4v4h-4z"/><circle class="b lb" cx="7" cy="8" r="3"/><path d="M7 1l5 4M12 2v3H9M10 12c-1 5 6 5 5 0M13 11h3v3"/></svg></button>
        <button class="t" aria-label="Scale"><svg viewBox="0 0 16 16"><path class="b lb" d="M.5.500h15v15H9V7H.5z"/><path class="w" d="M.5 7.500h8v8h-8z"/></svg></button>
        <button class="t" aria-label="Stretch"><svg viewBox="0 0 16 16"><path class="w" d="M.5.500h8v15h-8z"/><path class="b lb" d="M8.500.500h3l4 15h-7z"/><path d="M4 11.500h7M8 9l3 2.500L8 14" stroke="#000"/></svg></button>
        <button class="t" aria-label="Align edge"><svg viewBox="0 0 16 16"><path class="s" d="M.5 9.500h12v5H.5z"/><path class="w" d="M6.500 3.500h6v4h-6z"/><path d="M15 1v15" stroke="#000"/></svg></button>
        <button class="t" aria-label="Trim"><svg viewBox="0 0 16 16"><path d="M0 8.500h5M9 8.500h7" stroke-dasharray="3 1"/><path class="b" d="M4 14L9 3"/></svg></button>
        <button class="t" aria-label="Extend"><svg viewBox="0 0 16 16"><path d="M0 8.500h5" stroke="#000"/><path class="b" d="M5 8.500h5" stroke-dasharray="2 1"/><path class="b" d="M10 14l5-12"/></svg></button>
        <button class="t" aria-label="Lengthen"><svg viewBox="0 0 16 16"><path d="M2 14L14 2" stroke-dasharray="3 1"/><path class="w" d="M.5 13.500h2v2h-2zM13.500.500h2v2h-2z"/></svg></button>
        <button class="t" aria-label="Detail"><svg viewBox="0 0 16 16"><circle class="g" cx="9" cy="8" r="6"/><path d="M0 1l12 7-12 7"/></svg></button>
        <button class="t" aria-label="Break"><svg viewBox="0 0 16 16"><path class="w" d="M3 3.500H.5v10h15v-10H13"/><path class="bk" d="M3 2h3v3H3zM10 2h3v3h-3z"/></svg></button>
        <button class="t" aria-label="Break at point"><svg viewBox="0 0 16 16"><path class="w" d="M16 3.500H.5v10H16"/><path class="bk" d="M10 2h3v3h-3z"/></svg></button>
        <button class="t" aria-label="Join"><svg viewBox="0 0 16 16"><path class="w" d="M3 3.500H.5v10h15v-10H13"/><path class="bk" d="M3 2h2v2H3zM11 2h2v2h-2z"/><path class="k" d="M4 13h2v3H4z"/></svg></button>
        <button class="t" aria-label="Close gap"><svg viewBox="0 0 16 16"><path class="b" d="M1 8h14"/><path class="bk" d="M4 5l4 3-4 3zM12 5L8 8l4 3z"/></svg></button>
        <i class="sep"></i>
        <button class="t" aria-label="Multiple nodes"><svg viewBox="0 0 16 16"><path d="M0 14l12-13M8 0l7 7M1 6l6 7M10.500 16v-6h4v6"/><path class="w" d="M9.500 2.500h2v2h-2zM3.500 8.500h2v2h-2z"/></svg></button>
        <button class="t" aria-label="Nodes"><svg viewBox="0 0 16 16"><path d="M0 14L14 1M8 1l7 7M1 7l7 8"/><path class="w" d="M9.500 3.500h2v2h-2zM3.500 9.500h2v2h-2z"/></svg></button>
        <i class="sep"></i>
        <button class="t" aria-label="Chamfer"><svg viewBox="0 0 16 16"><path class="w" d="M.5 9.500l8-8h7v14H.5z"/><path class="b" d="M0 10l9-9"/></svg></button>
        <button class="t" aria-label="Chamfer dimension"><svg viewBox="0 0 16 16"><path d="M0 5l5 3M9 8l3-4M10.500 0v5M13.500.500h2v4h-2z"/><path class="b" d="M4 6l6 5v4"/></svg></button>
        <button class="t" aria-label="Fillet"><svg viewBox="0 0 16 16"><path class="w" d="M.5 15.500v-14H6c5 0 9 5 9 10v4z"/><path class="b" d="M6 1.500c5 0 9 5 9 10"/></svg></button>
        <i class="sep"></i>
        <button class="t" aria-label="Explode"><svg viewBox="0 0 16 16"><path class="b lb" d="M5.500 6.500h6v7h-6zM1 7l3-3v8l-3 2zM6 4l3-3h5l-3 3zM13 7l3-3v6l-3 3z"/></svg></button>
      </div>
    </div>
  </main>

  <section class="command" aria-label="Command window">
    <i class="cgrip"></i>
    <div class="lines">
      <p>Substituting [gbcbig.shx] for [HZDX.shx].</p>
      <p>Regenerating model.</p>
      <div class="prompt"><p>AutoCAD menu utilities loaded.</p>
        <div class="cscroll"><button class="sb" aria-label="Scroll left"><svg viewBox="0 0 10 10"><path d="M7 1L3 5l4 4"/></svg></button><button class="sb" aria-label="Position"><svg viewBox="0 0 10 10"><path class="ln" d="M1.500 1v8M3.500 1v8M5.500 1v8M7.500 1v8"/></svg></button><i class="space"></i><button class="sb" aria-label="Scroll right"><svg viewBox="0 0 10 10"><path d="M3 1l4 4-4 4"/></svg></button></div></div>
    </div>
  </section>

  <footer class="status">
    <output>1234.6030, -576.2921, 0.0000</output>
    <div class="modes">
      <button aria-label="Infer"><svg viewBox="0 0 16 16"><path d="M5.500 0v11M0 5.500h12M3.500 3.500h4v4h-4z"/><path d="M11.500 8.500h3v3h-3z" stroke="#2f6fc0"/><path d="M9.500 12.500h3v3h-3z" stroke="#c0602a"/></svg></button>
      <button aria-label="Ortho"><svg viewBox="0 0 16 16"><path d="M1.500 1v13.500H16M1.500 9.500h4v5" stroke="#444"/></svg></button>
      <button class="on" aria-label="Polar"><svg viewBox="0 0 16 16"><path d="M13 8a5 5 0 1 1-4-5M3 14L13 1M8 8h7M12 3v5"/></svg></button>
      <button class="on" aria-label="Object snap"><svg viewBox="0 0 16 16"><path class="w" d="M3.500 3.500h12v12h-12z"/><circle class="w" cx="2.500" cy="2.500" r="2" stroke="#d0602a"/></svg></button>
      <button aria-label="3D snap"><svg viewBox="0 0 16 16"><path class="w" d="M2 5l3-4h10v9l-3 4H2zM2 5h10v9M12 5l3-4"/><circle class="w" cx="2" cy="14" r="2" stroke="#d0602a"/></svg></button>
      <button class="on" aria-label="Tracking"><svg viewBox="0 0 16 16"><path d="M13 2L3 13.500h12"/></svg></button>
      <button class="on" aria-label="Dynamic UCS"><svg viewBox="0 0 16 16"><path d="M0 7.500h10M5.500 2v10M8.500 9.500h6v4h-6z" stroke="#000"/></svg></button>
      <button aria-label="Dynamic input"><svg viewBox="0 0 16 16"><path d="M1 9h14M9 2v13" stroke="#000"/></svg></button>
      <button class="on" aria-label="Transparency"><svg viewBox="0 0 16 16"><path fill="#a9d4f4" stroke="#3a7fc0" d="M.5.500h15v15H.5z"/><path d="M2 3h12M4 6h12M2 9h12M4 12h10" stroke="#6aa8dc" stroke-width="2" stroke-dasharray="2 2"/></svg></button>
      <button aria-label="Quick properties"><svg viewBox="0 0 16 16"><path class="w" d="M4.500 3.500h7v10h-7z" stroke="#000"/><path d="M6 6.500h4M6 8.500h4M6 10.500h4" stroke="#000" stroke-dasharray="1 1"/></svg></button>
      <button aria-label="Selection cycling"><svg viewBox="0 0 16 16"><path d="M4 0v8M0 4h8"/><path class="w" d="M4.500 5.500h7v7h-7z"/><path d="M7.500 8.500h8v7h-8z" fill="#7cb86a" stroke="#2c5c25"/></svg></button>
      <button class="wide">STRUCT</button>
    </div>
    <div class="modes right">
      <button class="mod">MODEL</button>
      <button aria-label="Layout"><svg viewBox="0 0 16 16"><path class="w" d="M2.500.500h11v11h-11zM5 4l4 6H5z"/><path d="M0 14.500h16" stroke-width="2"/></svg></button>
      <button aria-label="Quick view"><svg viewBox="0 0 16 16"><path class="w" d="M.5 1.500h7v8h-7zM8.500 1.500h7v8h-7z"/><path d="M1 13.500h14" stroke-width="2"/></svg></button>
    </div>
    <div class="modes end">
      <button aria-label="Workspace switching"><svg viewBox="0 0 16 16"><path class="w" d="M7 .500h2l.5 2 2 1 2-1 1 2-1 2v2l1.500 1-1 2-2 .5-1 1-.5 2.500H7l-1-2-2-1-2 .5-1-2 1.500-1.500v-2L1 5l1-2 2 .5 2-1z"/><circle class="g" cx="8" cy="8" r="2.500"/></svg></button>
      <button aria-label="Toolbar lock"><svg viewBox="0 0 16 16"><path class="w" d="M1.500 7.500h9v8h-9z"/><path d="M8 7V4c0-4 6-4 6 0v3M6 10v3" stroke="#222"/></svg></button>
      <button aria-label="Hardware acceleration"><svg viewBox="0 0 16 16"><path class="s" d="M0 2h13v8H0z"/><path d="M1.500 0v2M5.500 0v2M9.500 0v2M1.500 10v2M5.500 10v2"/><circle class="y" cx="13" cy="11" r="3"/></svg></button>
    </div>
    <div class="tray">
      <svg viewBox="0 0 16 16"><path fill="#1b66b8" stroke="none" d="M0 0h9v16H0z"/><path fill="#f4e12c" stroke="none" d="M9 0h7v16H9zM2 8l4-4v3h4v2H6v3z"/></svg>
      <svg viewBox="0 0 16 16"><path class="lb" d="M1.500 1.500h12v12h-12z"/><path class="y" d="M9 6l7 10H3z"/><path d="M9.500 9v3M9.500 13v2" stroke="#000"/></svg>
      <svg viewBox="0 0 16 16"><path class="y" d="M6 11C1 7 4 1 8 1s7 6 2 10z"/><path class="g" d="M6 11h4v4H6z"/></svg>
    </div>
    <div class="modes"><button class="slim" aria-label="Status menu"></button></div>
    <i class="sizer"></i>
  </footer>
</div>

<footer class="taskbar">
  <button class="start"><svg viewBox="0 0 20 20"><path d="M1 4c3-2 5-2 8 0L7 10c-3-2-4-2-7 0z" fill="#f06030"/><path d="M10 4c3 2 5 2 9 0l-2 7c-3 2-6 1-9-1z" fill="#7cc84a"/><path d="M0 11c3-2 4-1 7 0l-2 7c-2-2-4-2-6 0z" fill="#4d8cf0"/><path d="M8 12c3 2 5 2 8 1l-2 6c-3 1-5 1-8-1z" fill="#fac83c"/></svg>开始</button>
  <div class="tasks">
    <button class="task on"><svg><use href="#acad"/></svg>AutoCAD Mechanic...</button>
    <button class="task"><svg viewBox="0 0 16 16"><path class="w" d="M3 1h9l3 3v11H3z"/><path d="M2 9h8c0-5-7-5-7 0s5 4 7 2" stroke="#2b6fe0" stroke-width="2"/></svg><span><b>找不到服务器</b> - M...</span></button>
    <button class="task"><svg viewBox="0 0 16 16"><path fill="#0d3d78" stroke="#8fc4f4" d="M.5.500h15v15H.5z"/><path d="M12 1L4 8l9 5-5-5z" fill="#7fd4ff" stroke="#dff4ff"/></svg><span><b>迅雷</b>5</span></button>
  </div>
  <div class="notify">
    <svg viewBox="0 0 16 16"><path fill="#2b5c9c" stroke="#cfe4fa" d="M1 1h14v14H1z"/><path d="M12 3L4 8l8 4" stroke="#fff"/></svg>
    <svg viewBox="0 0 16 16"><circle cx="8" cy="8" r="6" fill="#4468c8" stroke="#e8c8d8"/></svg>
    <svg viewBox="0 0 16 16"><circle cx="8" cy="8" r="6" fill="#383c50" stroke="#99a"/></svg>
    <svg viewBox="0 0 16 16"><path d="M2 3h10l3 6H5z" fill="#35a03a"/></svg>
    <svg viewBox="0 0 16 16"><path d="M8 1l7 3v8l-7 3-7-3V4z" fill="#8cc83c" stroke="#f4e890"/></svg>
    <svg viewBox="0 0 16 16"><circle cx="8" cy="8" r="6" fill="#d02838"/></svg>
    <time>10:00</time>
  </div>
  <div class="mark"><b>三维网</b>www.3dportal.cn</div>
</footer>
</div>
</body>
</html>
```
FILE: styles.css
```css
* { box-sizing: border-box; }
body {
  margin: 0;
  font: 10px/14px "DejaVu Sans Mono", "Noto Sans CJK SC", monospace;
  color: #000;
}
h1, h2, p { margin: 0; }
i { display: block; flex: none; }
button {
  font: inherit; color: inherit; border: 0; padding: 0; background: none; flex: none;
  display: flex; align-items: center; justify-content: center;
}
svg { display: block; flex: none; fill: none; stroke: #343b44; overflow: visible; }
.defs { position: absolute; width: 0; height: 0; }

/* icon paints */
.w { fill: #f7f8fa; }
.g { fill: #c3c7cc; }
.s { fill: #6d7683; }
.k { fill: #111; stroke: none; }
.b { stroke: #1f6fb5; }
.lb { fill: #b5dcf5; }
.bk { fill: #1d62a8; stroke: none; }
.blue { stroke: #3b8fd8; }
.r { stroke: #d8262c; }
.o { fill: #f6a227; stroke: #b8690c; }
.y { fill: #fbe07a; stroke: #8a6420; }
.dim { opacity: .5; }

.desktop { min-height: 100vh; display: flex; flex-direction: column; background: #245edb; }
.window {
  flex: 1; display: flex; flex-direction: column;
  background: #676767;
  border: solid #5660c4; border-width: 2px 3px 0;
  border-top-color: #6a92e0;
}

/* title bar */
.titlebar {
  display: flex; gap: 6px; padding: 5px 4px 0 3px; height: 51px;
  border-top: 1px solid #2b2b2b; border-bottom: 1px solid #333;
  background:
    repeating-linear-gradient(135deg, rgba(255,255,255,.05) 0 1px, transparent 1px 4px),
    linear-gradient(#adadad, #8c8c8c 50%, #545454);
}
.appmenu { width: 40px; height: 42px; border: 1px solid #333; background: linear-gradient(#d2d2d2, #8d8d8d); }
.appmenu svg { width: 38px; height: 40px; }
.titlerows { flex: 1; min-width: 0; display: flex; flex-direction: column; gap: 2px; }
.row { display: flex; align-items: center; justify-content: space-between; height: 22px; }
.row + .row { height: 20px; }
.quick, .info, .controls { display: flex; align-items: center; }
.q { width: 24px; height: 22px; }
.q svg { width: 16px; height: 16px; }
.drop { width: 13px; height: 22px; }
.quick .drop { width: 12px; }
.drop::before { content: ""; border: solid transparent; border-width: 3px 3px 0; border-top-color: #555; }
.drop.more::before { border-width: 4px 4px 0; border-top-color: #111; }
h1 { flex: 1; padding-bottom: 3px; text-align: center; font-size: 13px; line-height: 18px; color: #fff; white-space: nowrap; }
.info .tri { width: 12px; height: 20px; }
.tri::before { content: ""; border: solid transparent; border-width: 3px 0 3px 4px; border-left-color: #000; }
.info input {
  width: 180px; height: 22px; border: 1px solid #6a6a6a; background: #f7f7f7; padding: 0 3px;
  font: italic 10px "DejaVu Sans Mono", monospace;
}
.info input::placeholder { color: #8a8a8a; opacity: 1; }
.bar { width: 1px; height: 18px; margin: 0 6px; background: #555; }
.controls { margin-left: 12px; }
.controls button { width: 17px; height: 18px; }
.controls svg { width: 12px; height: 12px; stroke: #2a2a2a; stroke-width: 2; }
.menu { display: flex; gap: 20px; padding-left: 7px; }
.menu a { color: #fff; text-decoration: none; }

/* toolbars */
.toolbars { display: flex; flex-direction: column; gap: 2px; padding: 0 4px 3px; }
.barrow { display: flex; gap: 1px; }
.toolbar { display: flex; align-items: center; height: 25px; border: 1px solid #333; background: #eee; }
.toolbar .grip { width: 7px; align-self: stretch; border: solid #555; border-width: 3px 1px; background: repeating-linear-gradient(#111 0 1px, #777 1px 2px); }
.t { width: 23px; height: 23px; }
.t svg { width: 16px; height: 16px; }
.sep { width: 2px; height: 19px; margin: 0 2px; background: #c9c6b8; }
.combo { position: relative; display: flex; align-items: center; height: 21px; background: #ece9d8; gap: 1px; }
.combo svg { width: 15px; height: 15px; }
.combo select {
  flex: 1; height: 21px; border: 0; padding: 0 22px 0 6px; opacity: 1;
  font: inherit; color: #aca899; appearance: none; background: #ece9d8;
}
.combo::before { content: ""; position: absolute; right: 1px; top: 1px; width: 16px; height: 19px; border: 1px solid #dedbcc; border-radius: 2px; background: #f2f0e6; }
.combo::after {
  content: ""; position: absolute; right: 6px; top: 6px; width: 6px; height: 6px;
  border: solid #c4c2b4; border-width: 0 2px 2px 0; transform: rotate(45deg);
}
.combo.ws { width: 175px; }
.combo.layer { width: 299px; padding-left: 3px; }
.swatch { width: 10px; height: 10px; border: 1px solid #000; background: #fff; }

/* work area */
.work { flex: 1; display: flex; gap: 4px; align-items: flex-start; padding: 0 6px 0 4px; margin-bottom: 6px; }
.dockcol { width: 24px; display: flex; flex-direction: column; gap: 1px; }
.dock { display: flex; flex-direction: column; align-items: center; border: 1px solid #333; background: #eee; }
.dock .grip { width: 100%; height: 8px; border: solid #555; border-width: 2px 4px; background: repeating-linear-gradient(90deg, #111 0 1px, #777 1px 2px); }
.dock .t { width: 22px; height: 22px; }
.dock .sep { width: 19px; height: 2px; margin: 2px 0; }

.mdi {
  flex: 1; min-width: 0; align-self: stretch; display: flex; flex-direction: column;
  border: solid #a09d88; border-width: 2px 3px 0 2px; border-right-color: #ece9d8; background: #ece9d8;
}
.view { flex: 1; display: flex; }
.canvas { flex: 1; position: relative; overflow: hidden; background: #212830; }
.drawing { position: absolute; inset: 0; width: 100%; height: 100%; }
.drawing path, .drawing circle, .drawing ellipse { vector-effect: non-scaling-stroke; stroke-width: 1; }
.dblue { stroke: #14508c; }
.dred { stroke: #573029; }
.dbrown { stroke: #80603f; }
.dgreen { stroke: #22e02c; }
.darrow { fill: #22e02c; stroke: none; }
.dwhite { stroke: #fff; }
.drawing text { stroke: none; }
.big { fill: #2fe039; font: 300 17px Lato, "Liberation Sans", sans-serif; }
.small { fill: #b87868; font: 8px "Liberation Sans", sans-serif; }
.navbar { position: absolute; top: 2px; right: 3px; width: 32px; height: 240px; border-radius: 4px; background: #50575d; }
.navbar svg { width: 32px; height: 240px; stroke: #3c4349; }
.nf { fill: #3c4349; stroke: none; }

.vscroll { width: 17px; display: flex; flex-direction: column; align-items: center; padding: 1px 0; background: linear-gradient(90deg, #f2f0e8, #fff 60%); }
.vscroll .above { flex: 25; }
.vscroll .below { flex: 12; }
.sb { width: 16px; height: 16px; border: 1px solid #fff; border-radius: 3px; background: linear-gradient(135deg, #dde7fd, #aebffa); box-shadow: inset 0 0 0 1px #b4c8f0; }
.sb svg { width: 10px; height: 10px; stroke: #4d6185; stroke-width: 2; }
.sb .ln { stroke: #8ea6e8; stroke-width: 1; }
.tabrow { display: flex; height: 16px; padding-right: 17px; align-items: stretch; }
.tabnav { display: flex; margin-right: 4px; }
.tabnav button { width: 15px; border: 1px solid #fff; border-right-color: #aca899; }
.tabnav svg { width: 13px; height: 13px; stroke: #aca899; }
.tabnav .nf { fill: #aca899; }
.tab { position: relative; padding: 1px 8px 0 7px; }
.tab::after { content: ""; position: absolute; top: 0; right: -2px; width: 1px; height: 16px; background: #222; transform: skewX(-20deg); }
.tab.on { color: #fff; padding: 1px 10px 0 8px; background: #212830; clip-path: polygon(0 0, 100% 0, calc(100% - 5px) 100%, 5px 100%); }
.hscroll { display: flex; align-items: center; width: 34%; margin-left: auto; background: linear-gradient(#f2f0e8, #fff); }
.split { width: 6px; height: 14px; margin-right: 1px; border: 1px solid #14365c; border-radius: 2px; background: #fff; }
.space { flex: 1; }

/* command window */
.command { display: flex; height: 56px; margin: 0 0 0 3px; border-right: 3px solid #676767; background: #fff; font: 13px/16px "Liberation Mono", monospace; }
.cgrip { width: 16px; border-radius: 6px 0 0 0; background: repeating-linear-gradient(90deg, #111 0 1px, #a0a0a0 1px 2px) 2px 3px / 12px 3px no-repeat, #a0a0a0; }
.lines { flex: 1; padding-top: 1px; }
.lines p { padding-left: 1px; }
.lines > p:nth-child(2) { height: 19px; }
.prompt { display: flex; justify-content: space-between; height: 20px; padding-top: 1px; border-top: 1px solid #aca899; align-items: center; }
.cscroll { display: flex; align-items: center; width: 83px; height: 18px; padding-right: 17px; background: #ece9d8; }
.cscroll .space { background: #fafaf5; align-self: stretch; }

/* status bar */
.status { display: flex; align-items: stretch; height: 25px; padding: 0 3px; border-top: 1px solid #000; border-bottom: 2px solid #4a4a4a; background: linear-gradient(#9b9b9b, #6a6a6a); }
.status output { width: 229px; padding: 4px 0 0 12px; }
.modes { display: flex; border-left: 1px solid #666; }
.modes button { width: 22px; border: solid #666; border-width: 0 1px 0 0; background: linear-gradient(#bdbdbd, #989898); }
.modes svg { width: 16px; height: 16px; }
.modes .on { background: linear-gradient(#dff2f6, #9fd0dc); }
.modes .wide { width: 42px; }
.modes .mod { width: 36px; }
.right { margin-left: auto; }
.end { margin: 0 5px 0 23px; }
.tray { display: flex; gap: 4px; align-items: center; width: 64px; height: 18px; align-self: center; padding: 0 3px; margin-right: 6px; border: 1px solid #444; background: #aaa; }
.tray svg { width: 16px; height: 16px; }
.modes .slim { width: 11px; }
.slim::before { content: ""; border: solid transparent; border-width: 4px 3px 0; border-top-color: #000; }
.sizer { width: 17px; background: radial-gradient(circle, #ddd 1px, transparent 1px) 0 0 / 4px 4px; clip-path: polygon(100% 30%, 100% 100%, 0 100%); }

/* task bar */
.taskbar { position: relative; display: flex; height: 30px; font-size: 10px; color: #fff; background: linear-gradient(#3168d5, #4993e6 8%, #245ddb 20%, #2560e0 88%, #1941a5); }
.taskbar b { font: 12px "Noto Sans CJK SC", sans-serif; }
.start { width: 97px; gap: 6px; border-radius: 0 12px 12px 0; background: linear-gradient(#5eac56, #3c873c 15%, #3d9a3c 70%, #2c6e2c); font: italic 19px/26px "Noto Sans CJK SC", sans-serif; text-shadow: 1px 1px 1px #1c4a1c; padding: 0 9px 3px 0; }
.start svg { width: 19px; height: 19px; stroke: none; }
.tasks { display: flex; gap: 1px; padding: 3px 0 3px 11px; }
.task { width: 159px; justify-content: flex-start; gap: 3px; padding-left: 11px; border-radius: 3px; background: linear-gradient(#5a9bf8, #3b7ff0 20%, #3a7cee); white-space: nowrap; }
.task.on { background: linear-gradient(#15409a, #1e52b7 20%); }
.task svg { width: 16px; height: 16px; }
.notify { display: flex; align-items: center; gap: 4px; width: 167px; margin-left: auto; padding-left: 11px; border-left: 1px solid #0d4ba8; background: linear-gradient(#18b9f4, #1290e8 20%, #139ee9); }
.notify svg { width: 14px; height: 14px; stroke: none; }
.notify time { margin-left: 2px; }
.mark {
  position: absolute; right: 18px; top: 5px; font: 16px/22px "DejaVu Sans", sans-serif; white-space: nowrap;
  text-shadow: 1px 0 #e01818, -1px 0 #e01818, 0 1px #e01818, 0 -1px #e01818;
}
.mark b { font: bold 18px/22px "Noto Sans CJK SC", sans-serif; }

/* message window */
.dialog { position: absolute; left: 484px; top: 211px; width: 498px; border: solid #0b3fd6; border-width: 0 3px 3px; border-radius: 7px 7px 0 0; background: #fff; overflow: hidden; }
.dialog header { display: flex; align-items: center; height: 29px; margin: 0 -3px; padding: 1px 5px 0 4px; background: linear-gradient(#0a5fe8, #3f93ff 8%, #0355e2 25%, #0260f5 75%, #0248c8); }
.dialog header svg { width: 16px; height: 16px; }
h2 { flex: 1; margin-left: 4px; font-size: 13px; line-height: 18px; color: #fff; }
.x { width: 21px; height: 21px; border: 1px solid #fff; border-radius: 3px; background: linear-gradient(135deg, #ee9377, #d8401a 50%, #b8300f); }
.dialog header .x svg { width: 14px; height: 14px; }
.message { display: flex; gap: 11px; padding: 10px 10px 9px; height: 95px; }
.warn { width: 30px; height: 30px; }
.message p { padding-top: 21px; }
.message a { display: inline-block; margin-top: 13px; outline: 1px dotted #333; color: #2a22d8; }
.dialog footer { display: flex; justify-content: flex-end; align-items: center; height: 41px; padding-right: 10px; background: #ece9d8; }
.ok { width: 68px; height: 20px; border: 1px solid #1c4f84; border-radius: 3px; background: linear-gradient(#fff, #ecebe6); box-shadow: inset 0 0 0 1px #b9cff0; }
```
